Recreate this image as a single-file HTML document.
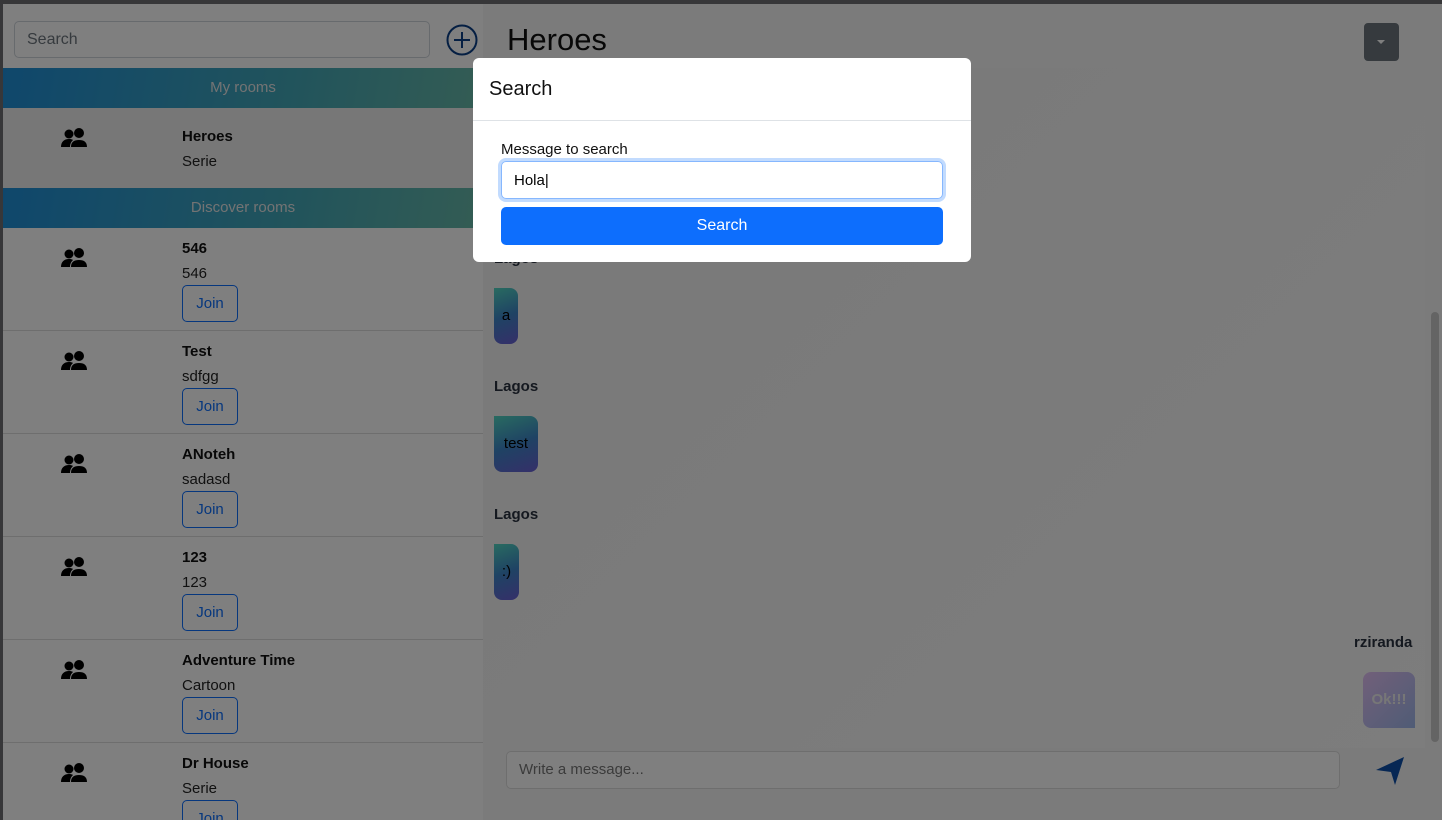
<!DOCTYPE html>
<html><head><meta charset="utf-8"><style>
*{box-sizing:border-box;margin:0;padding:0}
html,body{width:1442px;height:820px;overflow:hidden}
body{font-family:"Liberation Sans",sans-serif;background:#fff;position:relative;color:#212529}
.top{position:absolute;left:0;top:0;width:1442px;height:4px;background:#6f6f72}
.left{position:absolute;left:0;top:4px;width:483px;height:816px;border-left:3px solid #6f6f72;background:#fff;overflow:hidden}
.srch{position:absolute;left:11px;top:17px;width:416px;height:37px;border:1px solid #ced4da;border-radius:5px;font-size:16px;color:#6c757d;padding:9px 12px}
.plus{position:absolute;left:443px;top:20px}
.hdr{position:absolute;left:0;width:480px;height:40px;background:linear-gradient(100deg,#1f8fd8,#43a8b8 60%,#68b9a8);color:#e6e6e6;text-align:center;font-size:15px;line-height:40px}
.room{position:absolute;left:0;width:480px;border-bottom:1px solid #ddd}
.room svg{position:absolute;left:58px;top:20px}
.room .t{position:absolute;left:179px;top:12px;font-weight:bold;font-size:15px;color:#111}
.room .d{position:absolute;left:179px;top:37px;font-size:15px;color:#222}
.room .j{position:absolute;left:179px;top:57px;width:56px;height:37px;border:1px solid #0d6efd;border-radius:5px;color:#0d6efd;font-size:15px;text-align:center;line-height:35px}
.right{position:absolute;left:483px;top:4px;width:959px;height:816px;background:#f7f7f7}
.title{position:absolute;left:24px;top:18px;font-size:31px;color:#111}
.dd{position:absolute;left:881px;top:19px;width:35px;height:38px;background:#6c757d;border-radius:4px}
.dd:after{content:"";position:absolute;left:13px;top:17px;border:4px solid transparent;border-top:4px solid #fff}
.chat{position:absolute;left:0;top:64px;width:942px;height:680px;background:linear-gradient(135deg,#f3f3f3,#fafafa)}
.sb{position:absolute;left:948px;top:308px;width:8px;height:430px;background:#c8c8c8;border-radius:4px}
.nm{position:absolute;font-size:15px;font-weight:bold;color:#2a3240}
.bub{position:absolute;border-radius:0 8px 8px 8px;background:linear-gradient(160deg,#52d6c2,#3e86c8 50%,#6b5fd4);font-size:15px;color:#000;text-align:center}
.inp{position:absolute;left:23px;top:747px;width:834px;height:38px;border:1px solid #ddd;border-radius:5px;font-size:15px;color:#777;padding:9px 12px;background:#fff}
.ov{position:absolute;left:0;top:0;width:1442px;height:820px;background:rgba(0,0,0,.5)}
.modal{position:absolute;left:473px;top:58px;width:498px;height:204px;background:#fff;border-radius:6px}
.mh{height:63px;border-bottom:1px solid #dee2e6;font-size:20px;padding:20px 16px;color:#111}
.lab{position:absolute;left:28px;top:83px;font-size:15px;color:#111}
.mi{position:absolute;left:28px;top:103px;width:442px;height:38px;border:1px solid #86b7fe;border-radius:5px;box-shadow:0 0 0 3px rgba(13,110,253,.25);font-size:15px;padding:10px 12px;color:#000}
.mb{position:absolute;left:28px;top:149px;width:442px;height:38px;background:#0d6efd;border-radius:5px;color:#fff;font-size:16px;text-align:center;line-height:38px}
</style></head><body>
<div class="top"></div>
<div class="left">
<div class="srch">Search</div>
<svg class="plus" width="32" height="32" viewBox="0 0 32 32"><circle cx="16" cy="16" r="14.5" fill="none" stroke="#0b3f86" stroke-width="2"/><path d="M16 8v16M8 16h16" stroke="#0b3f86" stroke-width="2"/></svg>
<div class="hdr" style="top:64px">My rooms</div>
<div class="room" style="top:104px;height:80px;background:#eee;border:none"><svg width="26" height="20" viewBox="0 0 26 20"><circle cx="8" cy="6" r="4.5"/><circle cx="18" cy="5" r="5"/><path d="M0 19c0-5 3-8 8-8 3 0 4 1 4 1-2 2-3 4-3 7z M10 19c0-5 3-7 8-7s8 2 8 7z"/></svg><div class="t" style="top:20px">Heroes</div><div class="d" style="top:45px">Serie</div></div>
<div class="hdr" style="top:184px">Discover rooms</div>
<div class="room" style="top:224px;height:103px"><svg width="26" height="20" viewBox="0 0 26 20"><circle cx="8" cy="6" r="4.5"/><circle cx="18" cy="5" r="5"/><path d="M0 19c0-5 3-8 8-8 3 0 4 1 4 1-2 2-3 4-3 7z M10 19c0-5 3-7 8-7s8 2 8 7z"/></svg><div class="t">546</div><div class="d">546</div><div class="j">Join</div></div>
<div class="room" style="top:327px;height:103px"><svg width="26" height="20" viewBox="0 0 26 20"><circle cx="8" cy="6" r="4.5"/><circle cx="18" cy="5" r="5"/><path d="M0 19c0-5 3-8 8-8 3 0 4 1 4 1-2 2-3 4-3 7z M10 19c0-5 3-7 8-7s8 2 8 7z"/></svg><div class="t">Test</div><div class="d">sdfgg</div><div class="j">Join</div></div>
<div class="room" style="top:430px;height:103px"><svg width="26" height="20" viewBox="0 0 26 20"><circle cx="8" cy="6" r="4.5"/><circle cx="18" cy="5" r="5"/><path d="M0 19c0-5 3-8 8-8 3 0 4 1 4 1-2 2-3 4-3 7z M10 19c0-5 3-7 8-7s8 2 8 7z"/></svg><div class="t">ANoteh</div><div class="d">sadasd</div><div class="j">Join</div></div>
<div class="room" style="top:533px;height:103px"><svg width="26" height="20" viewBox="0 0 26 20"><circle cx="8" cy="6" r="4.5"/><circle cx="18" cy="5" r="5"/><path d="M0 19c0-5 3-8 8-8 3 0 4 1 4 1-2 2-3 4-3 7z M10 19c0-5 3-7 8-7s8 2 8 7z"/></svg><div class="t">123</div><div class="d">123</div><div class="j">Join</div></div>
<div class="room" style="top:636px;height:103px"><svg width="26" height="20" viewBox="0 0 26 20"><circle cx="8" cy="6" r="4.5"/><circle cx="18" cy="5" r="5"/><path d="M0 19c0-5 3-8 8-8 3 0 4 1 4 1-2 2-3 4-3 7z M10 19c0-5 3-7 8-7s8 2 8 7z"/></svg><div class="t">Adventure Time</div><div class="d">Cartoon</div><div class="j">Join</div></div>
<div class="room" style="top:739px;height:103px;border:none"><svg width="26" height="20" viewBox="0 0 26 20"><circle cx="8" cy="6" r="4.5"/><circle cx="18" cy="5" r="5"/><path d="M0 19c0-5 3-8 8-8 3 0 4 1 4 1-2 2-3 4-3 7z M10 19c0-5 3-7 8-7s8 2 8 7z"/></svg><div class="t">Dr House</div><div class="d">Serie</div><div class="j">Join</div></div>
</div>
<div class="right">
<div class="title">Heroes</div>
<div class="dd"></div>
<div class="chat"></div>
<div class="sb"></div>
<div class="nm" style="left:11px;top:246px">Lagos</div>
<div class="bub" style="left:11px;top:284px;width:24px;height:56px;line-height:56px">a</div>
<div class="nm" style="left:11px;top:374px">Lagos</div>
<div class="bub" style="left:11px;top:412px;width:44px;height:56px;line-height:56px">test</div>
<div class="nm" style="left:11px;top:502px">Lagos</div>
<div class="bub" style="left:11px;top:540px;width:25px;height:56px;line-height:56px">:)</div>
<div class="nm" style="left:871px;top:630px">rziranda</div>
<div class="bub" style="left:880px;top:668px;width:52px;height:56px;line-height:56px;border-radius:8px 8px 0 8px;background:linear-gradient(135deg,#e3c0f4,#9fb8ec);color:#eee;font-weight:bold">Ok!!!</div>
<div class="inp">Write a message...</div>
<svg style="position:absolute;left:892px;top:752px" width="30" height="30" viewBox="0 0 30 30"><path d="M1 14L29 1 20 29 16 16z" fill="#0d4fa8"/></svg>
</div>
<div class="ov"></div>
<div class="modal">
<div class="mh">Search</div>
<div class="lab">Message to search</div>
<div class="mi">Hola|</div>
<div class="mb">Search</div>
</div>
</body></html>
